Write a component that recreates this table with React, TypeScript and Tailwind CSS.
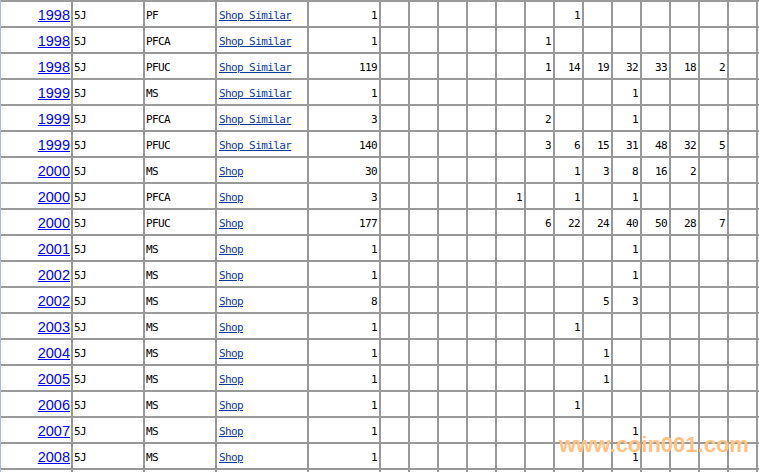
import React from "react";

type Row = {
  year: string;
  type: string;
  shop: string;
  total: string;
  vals: Record<number, string>;
};

const rows: Row[] = [
  { year: "1998", type: "PF", shop: "Shop Similar", total: "1", vals: { 7: "1" } },
  { year: "1998", type: "PFCA", shop: "Shop Similar", total: "1", vals: { 6: "1" } },
  { year: "1998", type: "PFUC", shop: "Shop Similar", total: "119", vals: { 6: "1", 7: "14", 8: "19", 9: "32", 10: "33", 11: "18", 12: "2" } },
  { year: "1999", type: "MS", shop: "Shop Similar", total: "1", vals: { 9: "1" } },
  { year: "1999", type: "PFCA", shop: "Shop Similar", total: "3", vals: { 6: "2", 9: "1" } },
  { year: "1999", type: "PFUC", shop: "Shop Similar", total: "140", vals: { 6: "3", 7: "6", 8: "15", 9: "31", 10: "48", 11: "32", 12: "5" } },
  { year: "2000", type: "MS", shop: "Shop", total: "30", vals: { 7: "1", 8: "3", 9: "8", 10: "16", 11: "2" } },
  { year: "2000", type: "PFCA", shop: "Shop", total: "3", vals: { 5: "1", 7: "1", 9: "1" } },
  { year: "2000", type: "PFUC", shop: "Shop", total: "177", vals: { 6: "6", 7: "22", 8: "24", 9: "40", 10: "50", 11: "28", 12: "7" } },
  { year: "2001", type: "MS", shop: "Shop", total: "1", vals: { 9: "1" } },
  { year: "2002", type: "MS", shop: "Shop", total: "1", vals: { 9: "1" } },
  { year: "2002", type: "MS", shop: "Shop", total: "8", vals: { 8: "5", 9: "3" } },
  { year: "2003", type: "MS", shop: "Shop", total: "1", vals: { 7: "1" } },
  { year: "2004", type: "MS", shop: "Shop", total: "1", vals: { 8: "1" } },
  { year: "2005", type: "MS", shop: "Shop", total: "1", vals: { 8: "1" } },
  { year: "2006", type: "MS", shop: "Shop", total: "1", vals: { 7: "1" } },
  { year: "2007", type: "MS", shop: "Shop", total: "1", vals: { 9: "1" } },
  { year: "2008", type: "MS", shop: "Shop", total: "1", vals: { 9: "1" } },
];

const mono = "font-['DejaVu_Sans_Mono',monospace] text-[11px] tracking-[-0.6px]";
const dataCols = [1, 2, 3, 4, 5, 6, 7, 8, 9, 10, 11, 12, 13];

export default function App() {
  return (
    <div className="relative w-[759px] h-[472px] overflow-hidden bg-white">
      <div className="flex">
        <div className="w-px shrink-0 bg-[#a9bdd9]" />
        <div className="grid grid-cols-[70px_70px_70px_90px_70px_repeat(14,27px)] auto-rows-[24px] gap-[2px] pt-[2px] bg-[#999999]">
          {rows.map((r, i) => (
            <React.Fragment key={i}>
              <div className="bg-white flex items-center justify-end pr-px pt-[3px]">
                <a href="#" className="font-['Liberation_Sans',Arial,sans-serif] text-[14.5px] leading-none text-[#0000ff] underline">
                  {r.year}
                </a>
              </div>
              <div className={`bg-white flex items-center pl-px pt-[5px] text-black ${mono}`}>5J</div>
              <div className={`bg-white flex items-center pl-px pt-[5px] text-black ${mono}`}>{r.type}</div>
              <div className={`bg-white flex items-center pl-[2px] pt-[5px] ${mono}`}>
                <a href="#" className="text-[#0a399f] underline">{r.shop}</a>
              </div>
              <div className={`bg-white flex items-center justify-end pr-[2px] pt-[5px] text-black ${mono}`}>{r.total}</div>
              {dataCols.map((c) => (
                <div key={c} className={`bg-white flex items-center justify-end pr-[2px] pt-[5px] text-black ${mono}`}>
                  {r.vals[c] ?? ""}
                </div>
              ))}
              <div className="bg-white" />
            </React.Fragment>
          ))}
          {Array.from({ length: 19 }).map((_, k) => (
            <div key={`e${k}`} className="bg-white" />
          ))}
        </div>
      </div>
      <div className="absolute left-[559px] top-[434px] font-['Liberation_Sans',Arial,sans-serif] font-bold text-[22px] leading-[22px] text-[#ffc285] whitespace-nowrap pointer-events-none">
        www.coin001.com
      </div>
    </div>
  );
}
